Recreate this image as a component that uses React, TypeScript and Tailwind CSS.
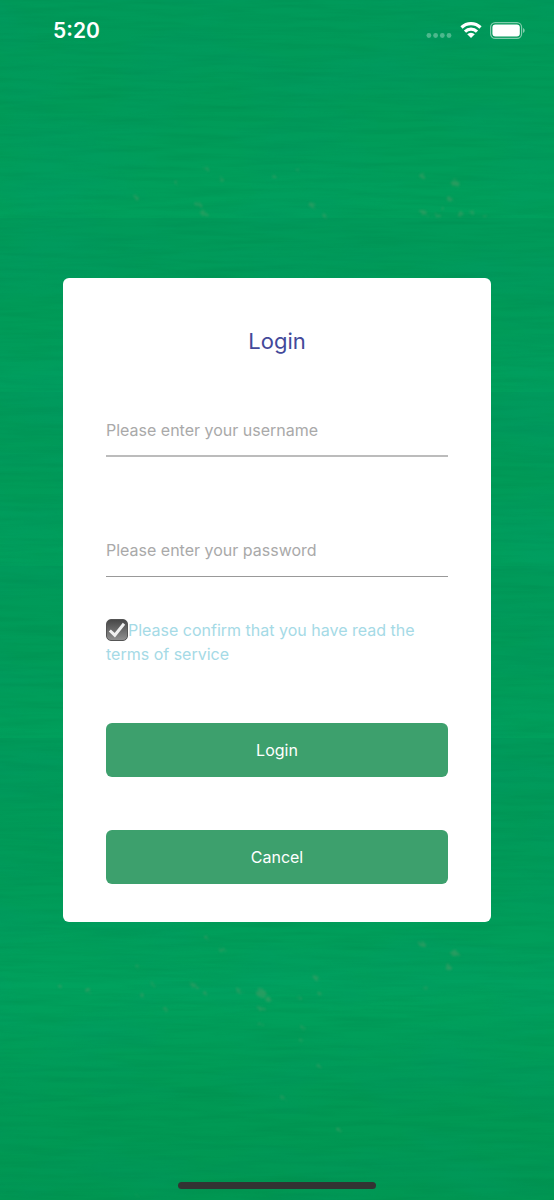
import { useState } from 'react';

// Planks of the painted board, from top to bottom
const planks = [
  { y: 0, height: 218, light: false },
  { y: 218, height: 174, light: false },
  { y: 392, height: 174, light: false },
  { y: 566, height: 172, light: false },
  { y: 738, height: 242, light: false },
  { y: 980, height: 220, light: true },
];

// Worn spots in the paint: x, y, radius
const spots = [
  [222, 180, 2], [206, 168, 2], [198, 204, 3], [204, 214, 3], [137, 198, 2], [176, 182, 2],
  [298, 170, 2], [312, 205, 3], [325, 216, 2], [274, 177, 2], [422, 175, 3], [455, 183, 4],
  [450, 199, 3], [442, 208, 2], [424, 213, 3], [438, 216, 3], [460, 214, 3], [472, 212, 2],
  [485, 216, 2], [222, 950, 3], [206, 937, 2], [137, 966, 2], [422, 944, 3], [454, 953, 4],
  [449, 968, 3], [426, 988, 2], [60, 986, 2], [87, 990, 3], [152, 984, 2], [193, 985, 3],
  [142, 995, 2], [166, 1010, 2], [205, 993, 2], [239, 991, 3], [261, 993, 5], [262, 1009, 3],
  [268, 999, 3], [300, 998, 2], [319, 993, 2], [315, 978, 3], [303, 1028, 2], [301, 1040, 2],
  [320, 1067, 2], [283, 1098, 2], [338, 1129, 2], [260, 1024, 2], [137, 1195, 1],
];

function Backdrop() {
  return (
    <svg
      className="absolute inset-0 h-full w-full"
      viewBox="0 0 554 1200"
      preserveAspectRatio="none"
      aria-hidden="true"
    >
      <defs>
        <linearGradient id="plank" x1="0" y1="0" x2="0" y2="1">
          <stop offset="0" stopColor="#009a5a" />
          <stop offset="0.5" stopColor="#009b58" />
          <stop offset="1" stopColor="#00a05c" />
        </linearGradient>
        <linearGradient id="plank-light" x1="0" y1="0" x2="0" y2="1">
          <stop offset="0" stopColor="#00a25e" />
          <stop offset="0.5" stopColor="#009a55" />
          <stop offset="1" stopColor="#009752" />
        </linearGradient>
        <filter id="grain" x="0" y="0" width="100%" height="100%" colorInterpolationFilters="sRGB">
          <feTurbulence type="fractalNoise" baseFrequency="0.012 0.18" numOctaves="4" seed="7" />
          <feColorMatrix values="0 0 0 0 0  0 0 0 0 0.45  0 0 0 0 0.25  1.6 0 0 0 -0.6" />
        </filter>
        <filter id="tint" x="0" y="0" width="100%" height="100%" colorInterpolationFilters="sRGB">
          <feTurbulence type="fractalNoise" baseFrequency="0.008 0.02" numOctaves="5" seed="3" />
          <feColorMatrix values="0 0 0 0 0  0 0 0 0 0.6  0 0 0 0 0.44  0 1.6 0 0 -0.6" />
        </filter>
        <filter id="worn" x="-50%" y="-50%" width="200%" height="200%">
          <feTurbulence type="fractalNoise" baseFrequency="0.3" numOctaves="2" seed="5" />
          <feDisplacementMap in="SourceGraphic" scale="9" />
          <feGaussianBlur stdDeviation="1" />
        </filter>
      </defs>
      {planks.map(({ y, height, light }) => (
        <rect
          key={y}
          y={y}
          width="554"
          height={height}
          fill={light ? 'url(#plank-light)' : 'url(#plank)'}
        />
      ))}
      <rect width="554" height="1200" filter="url(#grain)" opacity="0.2" />
      <rect width="554" height="1200" filter="url(#tint)" opacity="0.3" />
      <g fill="#4f9c66" opacity="0.5" filter="url(#worn)">
        {spots.map(([x, y, r]) => (
          <ellipse key={`${x}-${y}`} cx={x} cy={y} rx={r} ry={r * 0.8} />
        ))}
      </g>
    </svg>
  );
}

function StatusBar() {
  return (
    <header className="flex h-[60px] items-center justify-between pr-[29px] pl-[53px] text-white">
      <time className="pt-px text-[21px] leading-7 font-semibold">5:20</time>
      <div className="flex items-center gap-2">
        <svg className="mt-[11px] h-[5px] w-[26px]" viewBox="0 0 26 5" fill="#fff" opacity="0.3" aria-hidden="true">
          <circle cx="2.9" cy="2.5" r="2.4" />
          <circle cx="9.6" cy="2.5" r="2.4" />
          <circle cx="16.3" cy="2.5" r="2.4" />
          <circle cx="23" cy="2.5" r="2.4" />
        </svg>
        <svg className="h-4 w-[22px]" viewBox="0 0 22 16" fill="none" stroke="#fff" strokeWidth="3.2" aria-hidden="true">
          <path d="M1.5 5.500a13.600 13.600 0 0 1 19 0" />
          <path d="M5 9.600a8.600 8.600 0 0 1 12 0" />
          <path d="M7.200 12.200a5.400 5.400 0 0 1 7.600 0L11 16z" fill="#fff" stroke="none" />
        </svg>
        <svg className="h-[17px] w-[35px]" viewBox="0 0 35 17" aria-hidden="true">
          <rect x="0.6" y="0.6" width="31" height="15.8" rx="4.6" fill="none" stroke="#fff" strokeOpacity="0.5" strokeWidth="1.2" />
          <rect x="2.4" y="2.4" width="27.4" height="12.2" rx="3" fill="#fff" />
          <path d="M33 6v5c1-.4 1.7-1.4 1.7-2.5S34 6.400 33 6z" fill="#fff" fillOpacity="0.5" />
        </svg>
      </div>
    </header>
  );
}

function TermsCheckbox() {
  const [checked, setChecked] = useState(true);

  return (
    <label className="mt-[41px] block text-base text-[#a5dae6]">
      <span className="relative inline-block h-[22px] w-[22px] align-[-5px]">
        <input
          type="checkbox"
          checked={checked}
          onChange={(e) => setChecked(e.target.checked)}
          className="block h-full w-full appearance-none rounded-[5px] border border-[#555] bg-linear-to-b from-[#484848] to-[#909090]"
        />
        {checked && (
          <svg
            className="pointer-events-none absolute inset-0 h-full w-full"
            viewBox="0 0 22 22"
            fill="none"
            stroke="#f0f0f0"
            strokeWidth="3"
            aria-hidden="true"
          >
            <path d="M3.800 11.500l5 4.700L18 4.800" />
          </svg>
        )}
      </span>
      Please confirm that you have read the terms of service
    </label>
  );
}

export default function App() {
  return (
    <div className="relative min-h-screen bg-[#009a58] font-[Inter,sans-serif]">
      <Backdrop />
      <div className="relative flex min-h-screen flex-col">
        <StatusBar />

        <main className="flex flex-1 items-center px-[63px]">
          <form
            className="flex w-full flex-col rounded-md bg-white px-[43px] pt-[47px] pb-[38px]"
            onSubmit={(e) => e.preventDefault()}
          >
            <h1 className="text-center text-[22px] leading-8 text-[#43499a]">Login</h1>

            <input
              type="text"
              aria-label="Username"
              placeholder="Please enter your username"
              className="mt-12 h-[52px] w-full border-b-2 border-[#bcbcbc] text-base outline-none placeholder:text-[#a9a9a9]"
            />
            <input
              type="password"
              aria-label="Password"
              placeholder="Please enter your password"
              className="mt-[68px] h-[52px] w-full border-b border-[#999] pb-px text-base outline-none placeholder:text-[#a9a9a9]"
            />

            <TermsCheckbox />

            <button type="submit" className="mt-[57px] h-[54px] rounded-md bg-[#3da06d] text-base text-white">
              Login
            </button>
            <button type="button" className="mt-[53px] h-[54px] rounded-md bg-[#3da06d] text-base text-white">
              Cancel
            </button>
          </form>
        </main>

        {/* Home indicator */}
        <footer className="flex h-[60px] items-end justify-center pb-[11px]">
          <div className="h-[7px] w-[198px] rounded-full bg-[#333]" />
        </footer>
      </div>
    </div>
  );
}
